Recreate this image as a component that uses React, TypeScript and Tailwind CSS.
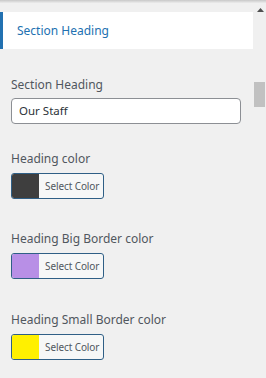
import React from "react";

const font = { fontFamily: '"Noto Sans", "Open Sans", sans-serif' };

function ColorField({ label, color, mt }: { label: string; color: string; mt: string }) {
  return (
    <div className={mt}>
      <div className="h-[18px] text-[12px] leading-[18px] text-[#50575e]">{label}</div>
      <div className="mt-[5px] flex h-[26px] w-[93px] overflow-hidden rounded-[3px] border border-[#2f5f86] bg-[#f6f7f7]">
        <div className="w-[27px] shrink-0" style={{ backgroundColor: color }} />
        <div className="flex flex-1 items-center pl-[6px] text-[10px] tracking-[-0.1px] text-[#50575e]">Select Color</div>
      </div>
    </div>
  );
}

export default function App() {
  return (
    <div className="relative h-[378px] w-[266px] overflow-hidden bg-[#f0f0f0]" style={font}>
      <div className="h-[3px] w-full bg-gradient-to-b from-[#c8c8c8] to-[#ececec]" />
      <div className="flex">
        <div className="w-[253px]">
          <div className="mt-[9px] flex h-[37px] items-center border-l-[3px] border-[#2271b1] bg-white pl-[14px] text-[12px] text-[#2271b1]">
            Section Heading
          </div>
          <div className="px-[11px]">
            <div className="mt-[27px]">
              <div className="h-[18px] text-[12px] leading-[18px] text-[#50575e]">Section Heading</div>
              <div className="mt-[4px] flex h-[26px] w-[230px] items-center rounded-[4px] border border-[#8c8f94] bg-white px-[7px] text-[11.5px] text-[#2c3338]">
                Our Staff
              </div>
            </div>
            <ColorField label="Heading color" color="#3e3e3e" mt="mt-[26px]" />
            <ColorField label="Heading Big Border color" color="#b88fe6" mt="mt-[31px]" />
            <ColorField label="Heading Small Border color" color="#fff000" mt="mt-[32px]" />
          </div>
        </div>
        <div className="relative w-[13px]">
          <svg className="absolute left-[4px] top-[5px]" width="7" height="5" viewBox="0 0 7 5">
            <polygon points="3.5,0 7,4 0,4" fill="#505050" />
          </svg>
          <div className="absolute left-[1px] top-[79px] h-[25px] w-[11px] bg-[#c1c1c1]" />
        </div>
      </div>
    </div>
  );
}
